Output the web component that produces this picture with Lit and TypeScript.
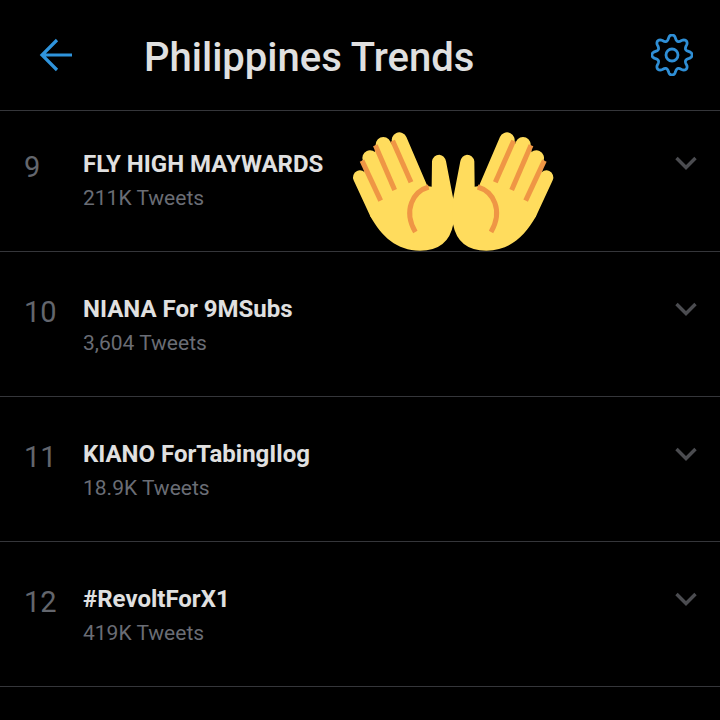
import { LitElement, html, css, svg } from "lit";
import { customElement } from "lit/decorators.js";

const rows = [
  { n: "9", t: "FLY HIGH MAYWARDS", s: "211K Tweets", first: true },
  { n: "10", t: "NIANA For 9MSubs", s: "3,604 Tweets" },
  { n: "11", t: "KIANO ForTabingIlog", s: "18.9K Tweets" },
  { n: "12", t: "#RevoltForX1", s: "419K Tweets" },
];

const gearPath = (() => {
  const pts: string[] = [];
  for (let i = 0; i < 160; i++) {
    const a = (i / 160) * Math.PI * 2;
    const c = Math.cos(8 * a);
    const r = 17.4 + 2.7 * Math.sign(c) * Math.pow(Math.abs(c), 0.75);
    pts.push(`${(21 + r * Math.sin(a)).toFixed(2)} ${(21 - r * Math.cos(a)).toFixed(2)}`);
  }
  return "M" + pts.join(" L") + " Z";
})();

const hand = svg`
  <g fill="none" stroke="#FFDC5D" stroke-linecap="round">
    <path d="M60 172 L110 280" stroke-width="42"/>
    <path d="M90 114 L160 270" stroke-width="46"/>
    <path d="M130 74 L200 240" stroke-width="46"/>
    <path d="M178 60 L240 205" stroke-width="46"/>
  </g>
  <path fill="#FFDC5D" d="M74 160 L66 122 L104 102 L106 76 L150 82 L158 62 L220 150 L262 198 L275 200 L276 124 Q280 104 298 104 Q314 106 318 124 L340 238 L340 312 Q325 392 240 392 C170 392 125 350 91 289 Z"/>
  <g fill="none" stroke="#EF9645" stroke-linecap="butt">
    <path d="M66 122 L122 242" stroke-width="15"/>
    <path d="M106 76 L164 210" stroke-width="15"/>
    <path d="M158 62 L213 187" stroke-width="15"/>
    <path d="M266 201 C220 214 188 270 226 336" stroke-width="15"/>
  </g>
`;

@customElement("app-root")
export class AppRoot extends LitElement {
  static styles = css`
    :host {
      display: block;
      width: 720px;
      height: 720px;
      background: #000;
      position: relative;
      overflow: hidden;
      font-family: Roboto, "Liberation Sans", sans-serif;
    }
    header {
      height: 111px;
      box-sizing: border-box;
      display: flex;
      align-items: center;
      padding: 0 27px 0 39px;
      border-bottom: 1px solid #35363a;
    }
    .title {
      flex: 1;
      margin-left: 71px;
      font-size: 40px;
      font-weight: 500;
      color: #e0e0e0;
      position: relative;
      top: 2px;
    }
    .back { display: block; }
    .row {
      height: 145px;
      box-sizing: border-box;
      border-bottom: 1px solid #35363a;
      display: flex;
      align-items: flex-start;
      padding: 42px 23px 0 24px;
    }
    .row.first { height: 141px; padding-top: 38px; }
    .num {
      width: 59px;
      font-size: 29px;
      line-height: 34px;
      color: #63666d;
      margin-top: 1px;
    }
    .text { flex: 1; }
    .trend {
      font-size: 24px;
      line-height: 30px;
      font-weight: 700;
      color: #e0e0e0;
    }
    .sub {
      font-size: 21px;
      line-height: 26px;
      margin-top: 6px;
      color: #6a6d75;
    }
    .chev { display: block; margin-top: 8px; }
    .first .chev { margin-top: 7px; }
    .emoji { position: absolute; left: 340px; top: 120px; }
  `;

  render() {
    return html`
      <header>
        <svg class="back" width="34" height="34" viewBox="0 0 34 34" fill="none" stroke="#2f94dc" stroke-width="3.2">
          <path d="M33 17 H3 M18 2 L3 17 L18 32"/>
        </svg>
        <div class="title">Philippines Trends</div>
        <svg width="42" height="42" viewBox="0 0 42 42" fill="none" stroke="#2f8fd6" stroke-width="2.8">
          <circle cx="21" cy="21" r="6"/>
          <path d=${gearPath} stroke-linejoin="round"/>
        </svg>
      </header>
      ${rows.map(
        (r) => html`
          <div class="row ${r.first ? "first" : ""}">
            <div class="num">${r.n}</div>
            <div class="text">
              <div class="trend">${r.t}</div>
              <div class="sub">${r.s}</div>
            </div>
            <svg class="chev" width="22" height="14" viewBox="0 0 22 14" fill="none" stroke="#4b4c50" stroke-width="3.4">
              <path d="M1.5 2 L11 11.5 L20.5 2"/>
            </svg>
          </div>
        `
      )}
      <svg class="emoji" width="230" height="140" viewBox="0 0 690 420">
        ${hand}
        <g transform="translate(679 0) scale(-1 1)">${hand}</g>
      </svg>
    `;
  }
}
